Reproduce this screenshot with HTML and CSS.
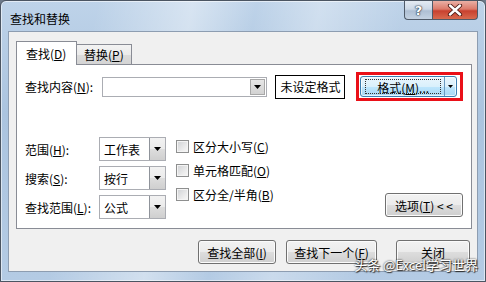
FILE: index.html
```html
<!DOCTYPE html>
<html lang="zh-CN">
<head>
    <meta charset="UTF-8">
    <title>查找和替换</title>
    <link rel="stylesheet" href="styles.css">
</head>
<body>
    <div class="window">
        <div class="titlebar">
            <span class="title">查找和替换</span>
            <div class="caption">
                <span class="cap help">?</span>
                <span class="cap close">
                    <svg width="16" height="12" viewBox="0 0 16 12">
                        <path d="M3 1.5 L13 10.5 M13 1.5 L3 10.5" stroke="#4a1a14" stroke-width="4.2" stroke-linecap="round"/>
                        <path d="M3 1.5 L13 10.5 M13 1.5 L3 10.5" stroke="#fff" stroke-width="2.4" stroke-linecap="round"/>
                    </svg>
                </span>
            </div>
        </div>

        <div class="client">
            <div class="tabs">
                <div class="tab active">查找(<u>D</u>)</div>
                <div class="tab">替换(<u>P</u>)</div>
            </div>

            <div class="panel">
                <div class="find-row">
                    <span class="lbl find-lbl">查找内容(<u>N</u>):</span>
                    <div class="combo">
                        <span class="combo-arrow"><svg width="7" height="4"><polygon points="0,0 7,0 3.5,4" fill="#000"/></svg></span>
                    </div>
                    <div class="preview">未设定格式</div>
                    <div class="mark">
                        <div class="split-btn">
                            <span class="split-main"><span class="focus">格式(<u>M</u>)...</span></span>
                            <span class="split-arrow"><svg width="5" height="3"><polygon points="0,0 5,0 2.5,3" fill="#000"/></svg></span>
                        </div>
                    </div>
                </div>

                <div class="opts">
                    <div class="selects">
                        <span class="lbl">范围(<u>H</u>):</span>
                        <div class="select"><span>工作表</span><i class="sel-btn"><svg width="7" height="4"><polygon points="0,0 7,0 3.5,4" fill="#000"/></svg></i></div>
                        <span class="lbl">搜索(<u>S</u>):</span>
                        <div class="select"><span>按行</span><i class="sel-btn"><svg width="7" height="4"><polygon points="0,0 7,0 3.5,4" fill="#000"/></svg></i></div>
                        <span class="lbl">查找范围(<u>L</u>):</span>
                        <div class="select"><span>公式</span><i class="sel-btn"><svg width="7" height="4"><polygon points="0,0 7,0 3.5,4" fill="#000"/></svg></i></div>
                    </div>

                    <div class="checks">
                        <label class="check"><i class="box"></i>区分大小写(<u>C</u>)</label>
                        <label class="check"><i class="box"></i>单元格匹配(<u>O</u>)</label>
                        <label class="check"><i class="box"></i>区分全/半角(<u>B</u>)</label>
                    </div>

                    <button class="btn opt-btn">选项(<u>T</u>) &lt; &lt;</button>
                </div>
            </div>

            <div class="actions">
                <button class="btn find-all">查找全部(<u>I</u>)</button>
                <button class="btn find-next">查找下一个(<u>F</u>)</button>
                <button class="btn close-btn">关闭</button>
            </div>
        </div>

        <div class="watermark">头条 @Excel学习世界</div>
    </div>
</body>
</html>
```

FILE: styles.css
```css
* {
    margin: 0;
    padding: 0;
    box-sizing: border-box;
}
body {
    width: 486px;
    height: 282px;
    overflow: hidden;
    font-family: "Noto Sans CJK SC", "Noto Sans", sans-serif;
    font-size: 12px;
    color: #000;
    background: #6d7a8a;
}
u {
    text-decoration: underline;
    text-underline-offset: 1px;
}

/* window frame */
.window {
    position: relative;
    width: 486px;
    height: 282px;
    border: 1px solid #4b5562;
    border-radius: 6px 6px 0 0;
    display: flex;
    flex-direction: column;
    background:
        linear-gradient(100deg, rgba(255,255,255,0) 18%, rgba(255,255,255,0.4) 36%, rgba(255,255,255,0) 48%, rgba(255,255,255,0.3) 60%, rgba(255,255,255,0) 76%),
        linear-gradient(180deg, #bed3e9 0%, #abc4df 40%, #b4cbe4 100%);
    box-shadow: inset 0 0 0 1px rgba(255,255,255,0.55);
}
.titlebar {
    height: 30px;
    display: flex;
    justify-content: space-between;
    align-items: flex-start;
    padding-left: 9px;
}
.title {
    line-height: 30px;
    font-size: 12px;
    color: #000;
    padding-top: 3px;
}
.caption {
    display: flex;
    margin-right: 7px;
}
.cap {
    height: 19px;
    border: 1px solid #4f5a68;
    border-top: none;
    display: flex;
    align-items: center;
    justify-content: center;
}
.help {
    width: 28px;
    border-radius: 0 0 0 4px;
    border-right: none;
    background: linear-gradient(180deg, #e4ebf3 0%, #ccd8e6 45%, #aebfd3 55%, #c4d2e2 100%);
    color: #fff;
    font-family: "DejaVu Sans", sans-serif;
    font-weight: bold;
    font-size: 13px;
    text-shadow: 0 0 1px #2c3a4a, 0 0 1px #2c3a4a, 0 0 2px #2c3a4a;
}
.close {
    width: 46px;
    border-radius: 0 0 4px 0;
    background: linear-gradient(180deg, #eab0a5 0%, #dc7a6a 45%, #c8412f 55%, #d86a4e 100%);
}

/* client area */
.client {
    flex: 1;
    margin: 0 7px 9px 7px;
    background: #f0f0f0;
    border: 1px solid #8d9db1;
    padding: 9px 7px 0 7px;
}
.tabs {
    display: flex;
    align-items: flex-end;
    height: 23px;
}
.tab {
    height: 20px;
    line-height: 19px;
    padding: 0 7px;
    border: 1px solid #898c95;
    border-bottom: none;
    border-left: none;
    background: linear-gradient(180deg, #f3f3f3 0%, #ebebeb 50%, #dcdcdc 51%, #d4d4d4 100%);
}
.tab.active {
    height: 24px;
    line-height: 23px;
    width: 61px;
    padding: 0 0 0 9px;
    border-left: 1px solid #898c95;
    background: #fff;
    margin-bottom: -1px;
    position: relative;
    z-index: 1;
}
.panel {
    width: 456px;
    height: 165px;
    border: 1px solid #898c95;
    background: #fff;
    padding: 0 8px;
}
.lbl {
    white-space: nowrap;
}

/* search row */
.find-row {
    display: flex;
    align-items: center;
    height: 29px;
    margin-top: 7px;
}
.find-lbl {
    width: 78px;
}
.combo {
    width: 168px;
    height: 20px;
    border: 1px solid #abadb3;
    background: #fff;
    display: flex;
    justify-content: flex-end;
    align-items: center;
    padding-right: 1px;
}
.combo-arrow {
    width: 15px;
    height: 16px;
    background: linear-gradient(180deg, #e6e6e6, #d2d2d2);
    border: 1px solid #a8a8a8;
    display: flex;
    align-items: center;
    justify-content: center;
}
.combo-arrow svg,
.sel-btn svg,
.split-arrow svg {
    display: block;
}
.preview {
    width: 71px;
    height: 24px;
    margin-left: 8px;
    border: 1px solid #000;
    background: #fff;
    line-height: 22px;
    text-align: center;
}
.mark {
    margin-left: 11px;
    width: 108px;
    height: 29px;
    border: 3px solid #ea1018;
    padding: 1px 3px 1px 1px;
}
.split-btn {
    height: 100%;
    display: flex;
    border: 1px solid #3c7fb1;
    border-radius: 3px;
    background: linear-gradient(180deg, #eaf6fd 0%, #d9f0fc 50%, #bee6fd 51%, #a7d9f5 100%);
    box-shadow: inset 0 0 0 1px rgba(255,255,255,0.7);
}
.split-main {
    flex: 1;
    padding: 2px 3px 2px 4px;
    border-right: 1px solid #6a9ac0;
}
.focus {
    display: block;
    height: 100%;
    border: 1px dotted #333;
    text-align: center;
    line-height: 15px;
}
.split-arrow {
    width: 11px;
    display: flex;
    align-items: center;
    justify-content: center;
}

/* options */
.opts {
    display: flex;
    align-items: flex-start;
    margin-top: 36px;
}
.selects {
    display: grid;
    grid-template-columns: 74px 67px;
    grid-auto-rows: 24px;
    row-gap: 5px;
    align-items: center;
}
.select {
    height: 24px;
    border: 1px solid #abadb3;
    background: #fff;
    display: flex;
    align-items: center;
    justify-content: space-between;
    padding-left: 4px;
    font-size: 12px;
}
.sel-btn {
    width: 16px;
    height: 22px;
    border-left: 1px solid #8f939a;
    background: linear-gradient(180deg, #f2f2f2 0%, #ebebeb 50%, #dddddd 51%, #cfcfcf 100%);
    display: flex;
    align-items: center;
    justify-content: center;
}
.checks {
    display: flex;
    flex-direction: column;
    gap: 10px;
    margin-left: 10px;
    margin-top: 2px;
}
.check {
    display: flex;
    align-items: center;
    height: 14px;
    white-space: nowrap;
}
.box {
    width: 13px;
    height: 13px;
    margin-right: 4px;
    border: 1px solid #8e8f8f;
    background: linear-gradient(135deg, #cfd1d4 0%, #eeeeee 70%, #f7f7f7 100%);
    box-shadow: inset 0 0 0 1px #f4f4f4;
}

/* buttons */
.btn {
    font-family: inherit;
    font-size: 12px;
    color: #000;
    height: 24px;
    border: 1px solid #707070;
    border-radius: 3px;
    background: linear-gradient(180deg, #f2f2f2 0%, #ebebeb 50%, #dddddd 51%, #cfcfcf 100%);
    box-shadow: inset 0 0 0 1px #fbfbfb;
}
.opt-btn {
    width: 78px;
    margin-left: auto;
    align-self: flex-end;
    margin-bottom: 2px;
}
.actions {
    display: flex;
    justify-content: flex-end;
    margin-top: 11px;
}
.find-all {
    width: 78px;
}
.find-next {
    width: 91px;
    margin-left: 10px;
}
.close-btn {
    width: 74px;
    margin-left: 19px;
}

/* watermark overlay */
.watermark {
    position: absolute;
    right: 7px;
    bottom: 8px;
    font-size: 13px;
    line-height: 16px;
    color: #fff;
    text-shadow: 0 0 2px #000, 1px 1px 1px #333;
}
```
